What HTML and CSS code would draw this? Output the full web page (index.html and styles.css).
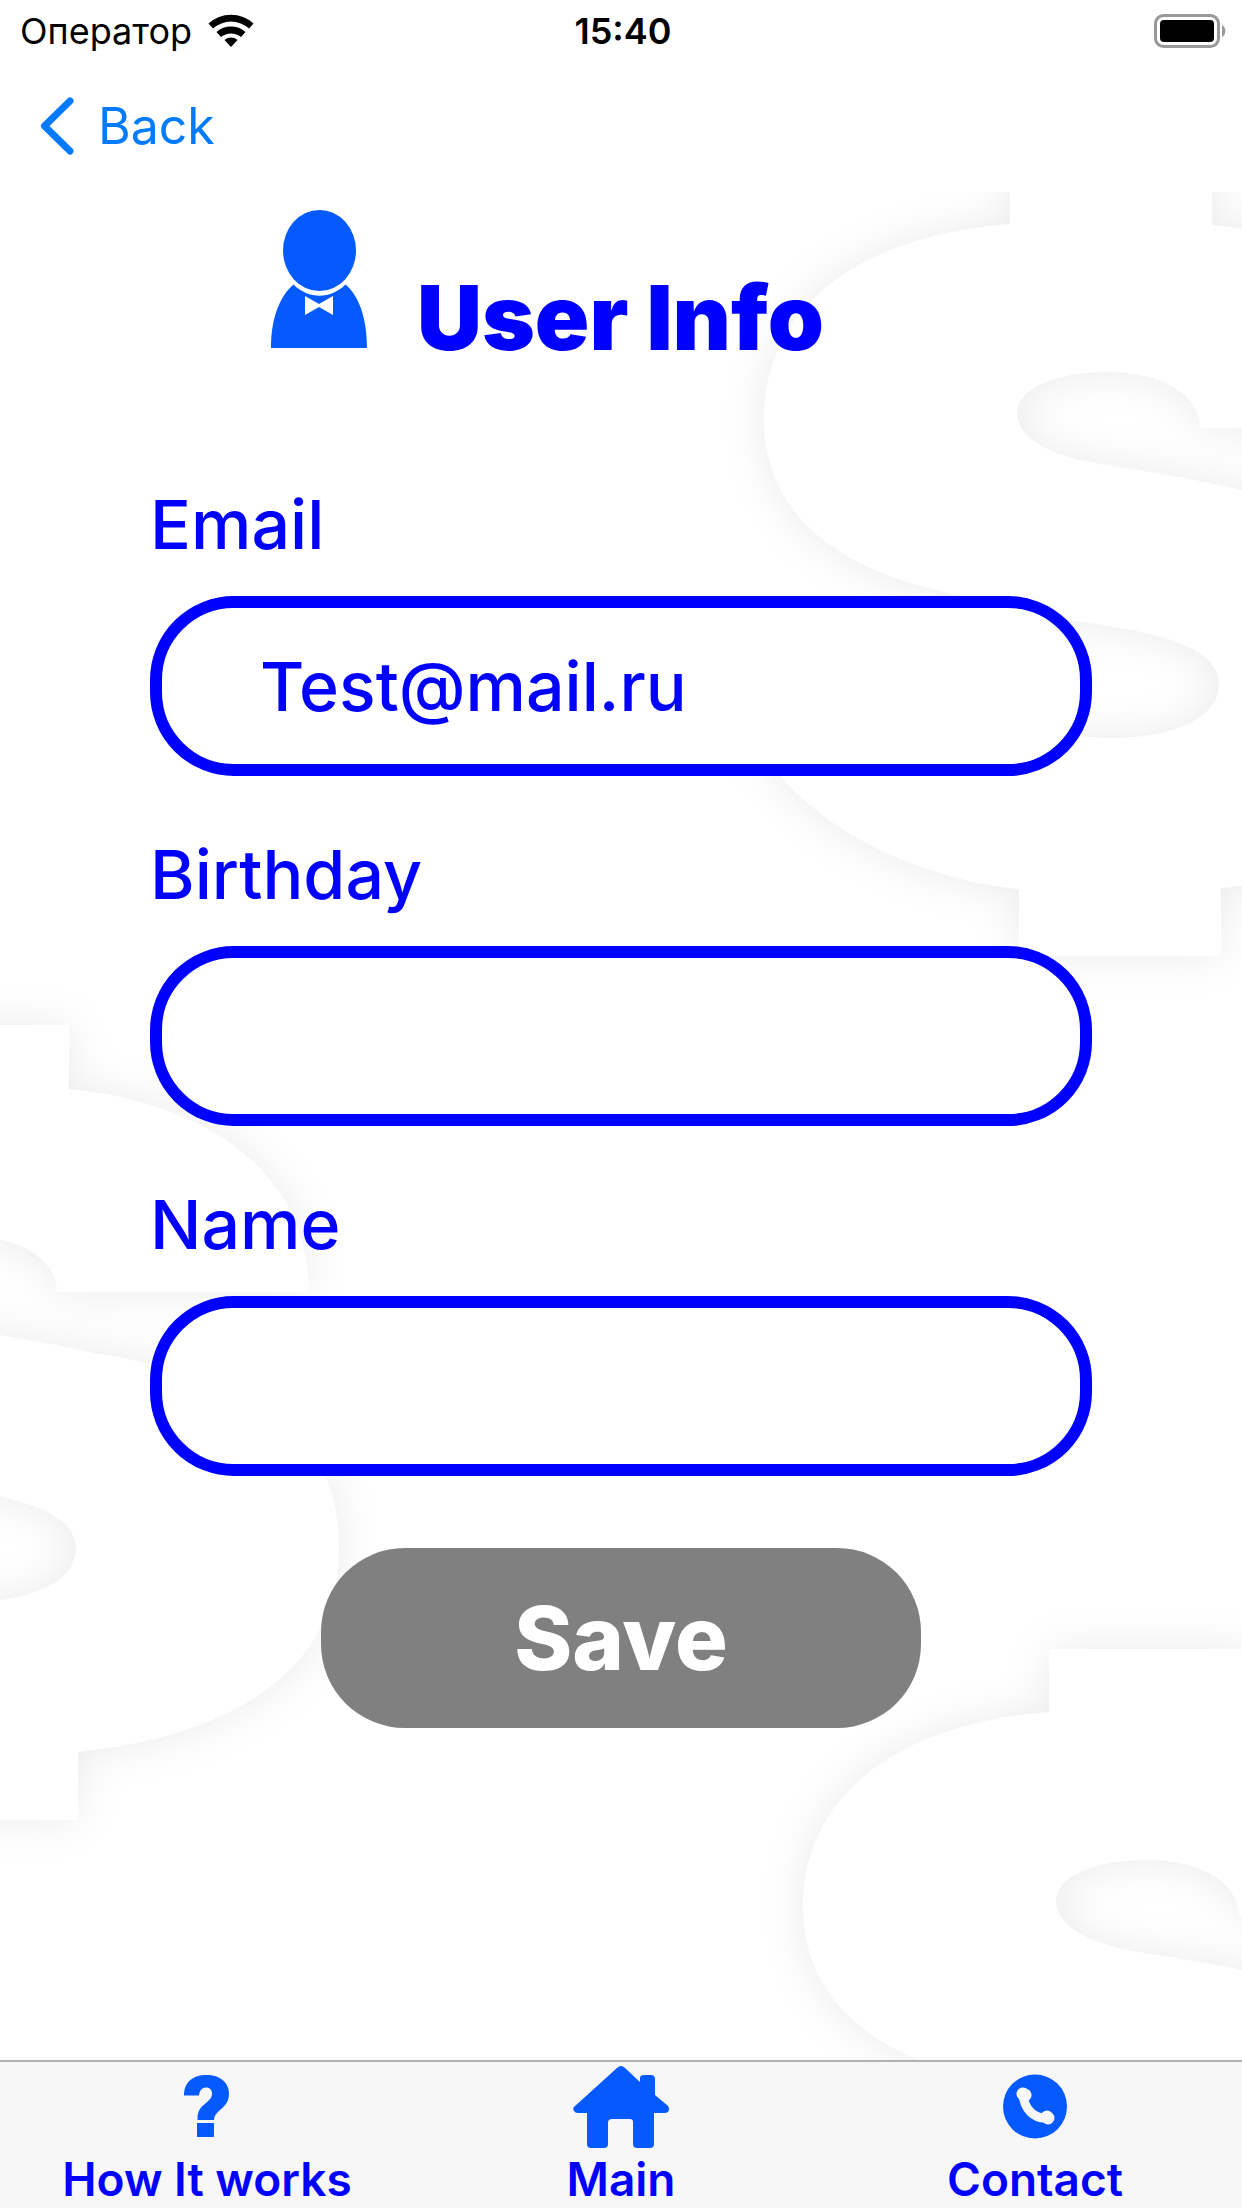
FILE: index.html
```html
<!DOCTYPE html>
<html lang="en">
<head>
<meta charset="utf-8">
<meta name="viewport" content="width=device-width, initial-scale=1">
<title>User Info</title>
<link rel="stylesheet" href="styles.css">
</head>
<body>
<div class="app">
  <header class="top">
    <div class="status">
      <div class="carrier">
        <span lang="ru">Оператор</span>
        <svg class="wifi" viewBox="0 0 46 34" aria-hidden="true">
          <path d="M0.500 9.500A33 33 0 0 1 45.500 9.500L41 14.500A27 27 0 0 0 5 14.500Z"/>
          <path d="M8.500 18A22 22 0 0 1 37.500 18L33 23A16 16 0 0 0 13 23Z"/>
          <path d="M16.500 26A10 10 0 0 1 29.500 26L23 33Z"/>
        </svg>
      </div>
      <time class="clock">15:40</time>
      <svg class="battery" viewBox="0 0 72 34" aria-hidden="true">
        <rect x="1.500" y="1.500" width="63" height="31" rx="8" fill="none" stroke="#999" stroke-width="3"/>
        <rect x="6" y="6" width="54" height="22" rx="4"/>
        <path d="M68 11a7 7 0 0 1 0 12z" fill="#999"/>
      </svg>
    </div>
    <nav class="navbar">
      <a class="back" href="#">
        <svg class="chevron" viewBox="0 0 34 58" aria-hidden="true"><path d="M30 4L4.500 29L30 54"/></svg>
        Back
      </a>
    </nav>
  </header>

  <main class="screen">
    <div class="backdrop" aria-hidden="true">
      <svg class="coin coin-top" viewBox="-40 0 770 800">
        <path id="coin" d="M246 0H448V64C590 78 688 150 688 267H436C436 235 400 211 344 211C290 211 253 228 253 252C253 278 290 296 336 303C380 310 430 318 478 329C640 355 718 410 718 522C718 640 620 710 457 727V795H255V728C170 720 10 670 -30 528H240C245 560 290 577 349 577C410 577 455 556 455 524C455 490 410 472 303 459L186 432C70 408 0 350 0 258C0 150 90 75 246 63Z"/>
      </svg>
      <svg class="coin coin-left" viewBox="-40 0 770 800"><use href="#coin"/></svg>
      <svg class="coin coin-bottom" viewBox="-40 0 770 800"><use href="#coin"/></svg>
    </div>
    <form class="form">
      <div class="heading">
        <svg class="person" viewBox="0 0 96 138" aria-hidden="true">
          <ellipse cx="48.500" cy="40.500" rx="36.500" ry="40.500"/>
          <path d="M0 138C0 108 9 86 22.500 74.500C38 89.500 59 89.500 74.500 74.500C88 86 96 108 96 138Z"/>
          <path class="bow" d="M34 86L48 94L62 86V105L48 97L34 105Z"/>
        </svg>
        <h1 class="title">User Info</h1>
      </div>
      <label class="label" for="email">Email</label>
      <input class="field" id="email" type="email" value="Test@mail.ru">
      <label class="label" for="birthday">Birthday</label>
      <input class="field" id="birthday" type="text">
      <label class="label" for="name">Name</label>
      <input class="field" id="name" type="text">
      <button class="save" type="submit">Save</button>
    </form>
  </main>

  <nav class="tabs">
    <a class="tab" href="#">
      <svg class="tab-icon" viewBox="0 0 96 82" aria-hidden="true">
        <path d="M25 29.500C25 16 34 9 47.500 9C61 9 70 16.500 70 27.500C70 35 67 39 61 44C57 47.500 55 50 55 54H38.500C38.500 45 41 41.500 47 37C51 33.500 53 31.500 53 28C53 24 51 21.500 47 21.500C43 21.500 40.500 24.500 40 29.500Z"/>
        <rect x="38" y="57" width="17" height="14"/>
      </svg>
      How It works
    </a>
    <a class="tab" href="#">
      <svg class="tab-icon" viewBox="0 0 96 82" aria-hidden="true">
        <path d="M44 2Q48 -2 52 2L67 16V12Q67 9 71 9H78Q82 9 82 13V29L95 40Q97 43 95 46Q94 47 91 47H81V78Q81 82 77 82H64Q60 82 60 78V56Q60 53 57 53H39Q35 53 35 57V78Q35 82 31 82H18Q14 82 14 78V47H5Q2 47 1 45Q-1 42 2 40Z"/>
      </svg>
      Main
    </a>
    <a class="tab" href="#">
      <svg class="tab-icon" viewBox="0 0 96 82" aria-hidden="true">
        <circle cx="48" cy="40.500" r="32"/>
        <path class="handset" d="M36 28C37 43 47 53 60 52"/>
        <path class="handset-end" d="M36 28L38 29M61 52L60 51"/>
      </svg>
      Contact
    </a>
  </nav>
</div>
</body>
</html>
```
FILE: styles.css
```css
* {
  box-sizing: border-box;
}

body {
  margin: 0;
  background: #fff;
  color: #00f;
  font-family: Inter, "Liberation Sans", sans-serif;
}

a {
  color: inherit;
  text-decoration: none;
}

.app {
  display: flex;
  flex-direction: column;
  min-height: 100vh;
}

/* Status bar and navigation */
.status {
  display: grid;
  grid-template-columns: 1fr auto 1fr;
  align-items: center;
  height: 60px;
  padding: 2px 16px 0 20px;
  color: #000;
  font-size: 36px;
}

.carrier {
  display: flex;
  align-items: center;
  gap: 16px;
}

.wifi {
  width: 46px;
  height: 34px;
}

.clock {
  font-weight: 600;
}

.battery {
  width: 72px;
  height: 34px;
  justify-self: end;
}

.navbar {
  display: flex;
  height: 132px;
  padding: 0 40px;
}

.back {
  display: flex;
  align-items: center;
  gap: 24px;
  color: #007aff;
  font-size: 50px;
}

.chevron {
  width: 34px;
  height: 58px;
  fill: none;
  stroke: currentColor;
  stroke-width: 7;
  stroke-linecap: round;
  stroke-linejoin: round;
}

/* Faint embossed artwork behind the form */
.screen {
  position: relative;
  flex: 1;
  overflow: hidden;
}

.backdrop {
  position: absolute;
  inset: 0;
}

.coin {
  position: absolute;
  width: 770px;
  height: 800px;
  overflow: visible;
  fill: #fff;
  filter: drop-shadow(0 0 22px rgba(0, 0, 0, 0.08));
}

.coin-top {
  top: -31px;
  right: -252px;
}

.coin-left {
  top: 833px;
  left: -419px;
}

.coin-bottom {
  top: 1457px;
  right: -291px;
}

/* Form */
.form {
  position: relative;
  display: flex;
  flex-direction: column;
  padding: 18px 150px 48px;
}

.heading {
  display: flex;
  align-items: flex-end;
  gap: 50px;
  height: 160px;
  margin-bottom: 114px;
  padding-left: 121px;
}

.person {
  width: 96px;
  height: 138px;
  margin-bottom: 22px;
  fill: #055aff;
}

.bow {
  fill: #fff;
}

.title {
  margin: 0;
  font-size: 90px;
  font-weight: 900;
  line-height: 104px;
  white-space: nowrap;
}

.label {
  height: 112px;
  font-size: 68px;
  font-weight: 500;
  line-height: 80px;
}

.field {
  width: 100%;
  height: 180px;
  margin: 0 0 58px;
  padding: 0 98px;
  border: 12px solid #00f;
  border-radius: 84px;
  background: #fff;
  color: #00f;
  font: inherit;
  font-size: 68px;
  font-weight: 500;
  outline: none;
}

.save {
  align-self: center;
  width: 600px;
  height: 180px;
  margin: 14px 0 0;
  border: 0;
  border-radius: 84px;
  background: #808080;
  color: #fff;
  font: inherit;
  font-size: 88px;
  font-weight: 800;
}

/* Tab bar */
.tabs {
  display: grid;
  grid-template-columns: repeat(3, 1fr);
  border-top: 2px solid #b2b2b2;
  background: #f7f7f7;
}

.tab {
  display: flex;
  flex-direction: column;
  align-items: center;
  gap: 3px;
  height: 146px;
  padding-top: 4px;
  font-size: 46px;
  font-weight: 600;
  line-height: 56px;
}

.tab-icon {
  width: 96px;
  height: 82px;
  fill: #055aff;
}

.tab-icon .handset,
.tab-icon .handset-end {
  fill: none;
  stroke: #f7f7f7;
  stroke-width: 9;
  stroke-linecap: round;
}

.tab-icon .handset-end {
  stroke-width: 13;
}
```
